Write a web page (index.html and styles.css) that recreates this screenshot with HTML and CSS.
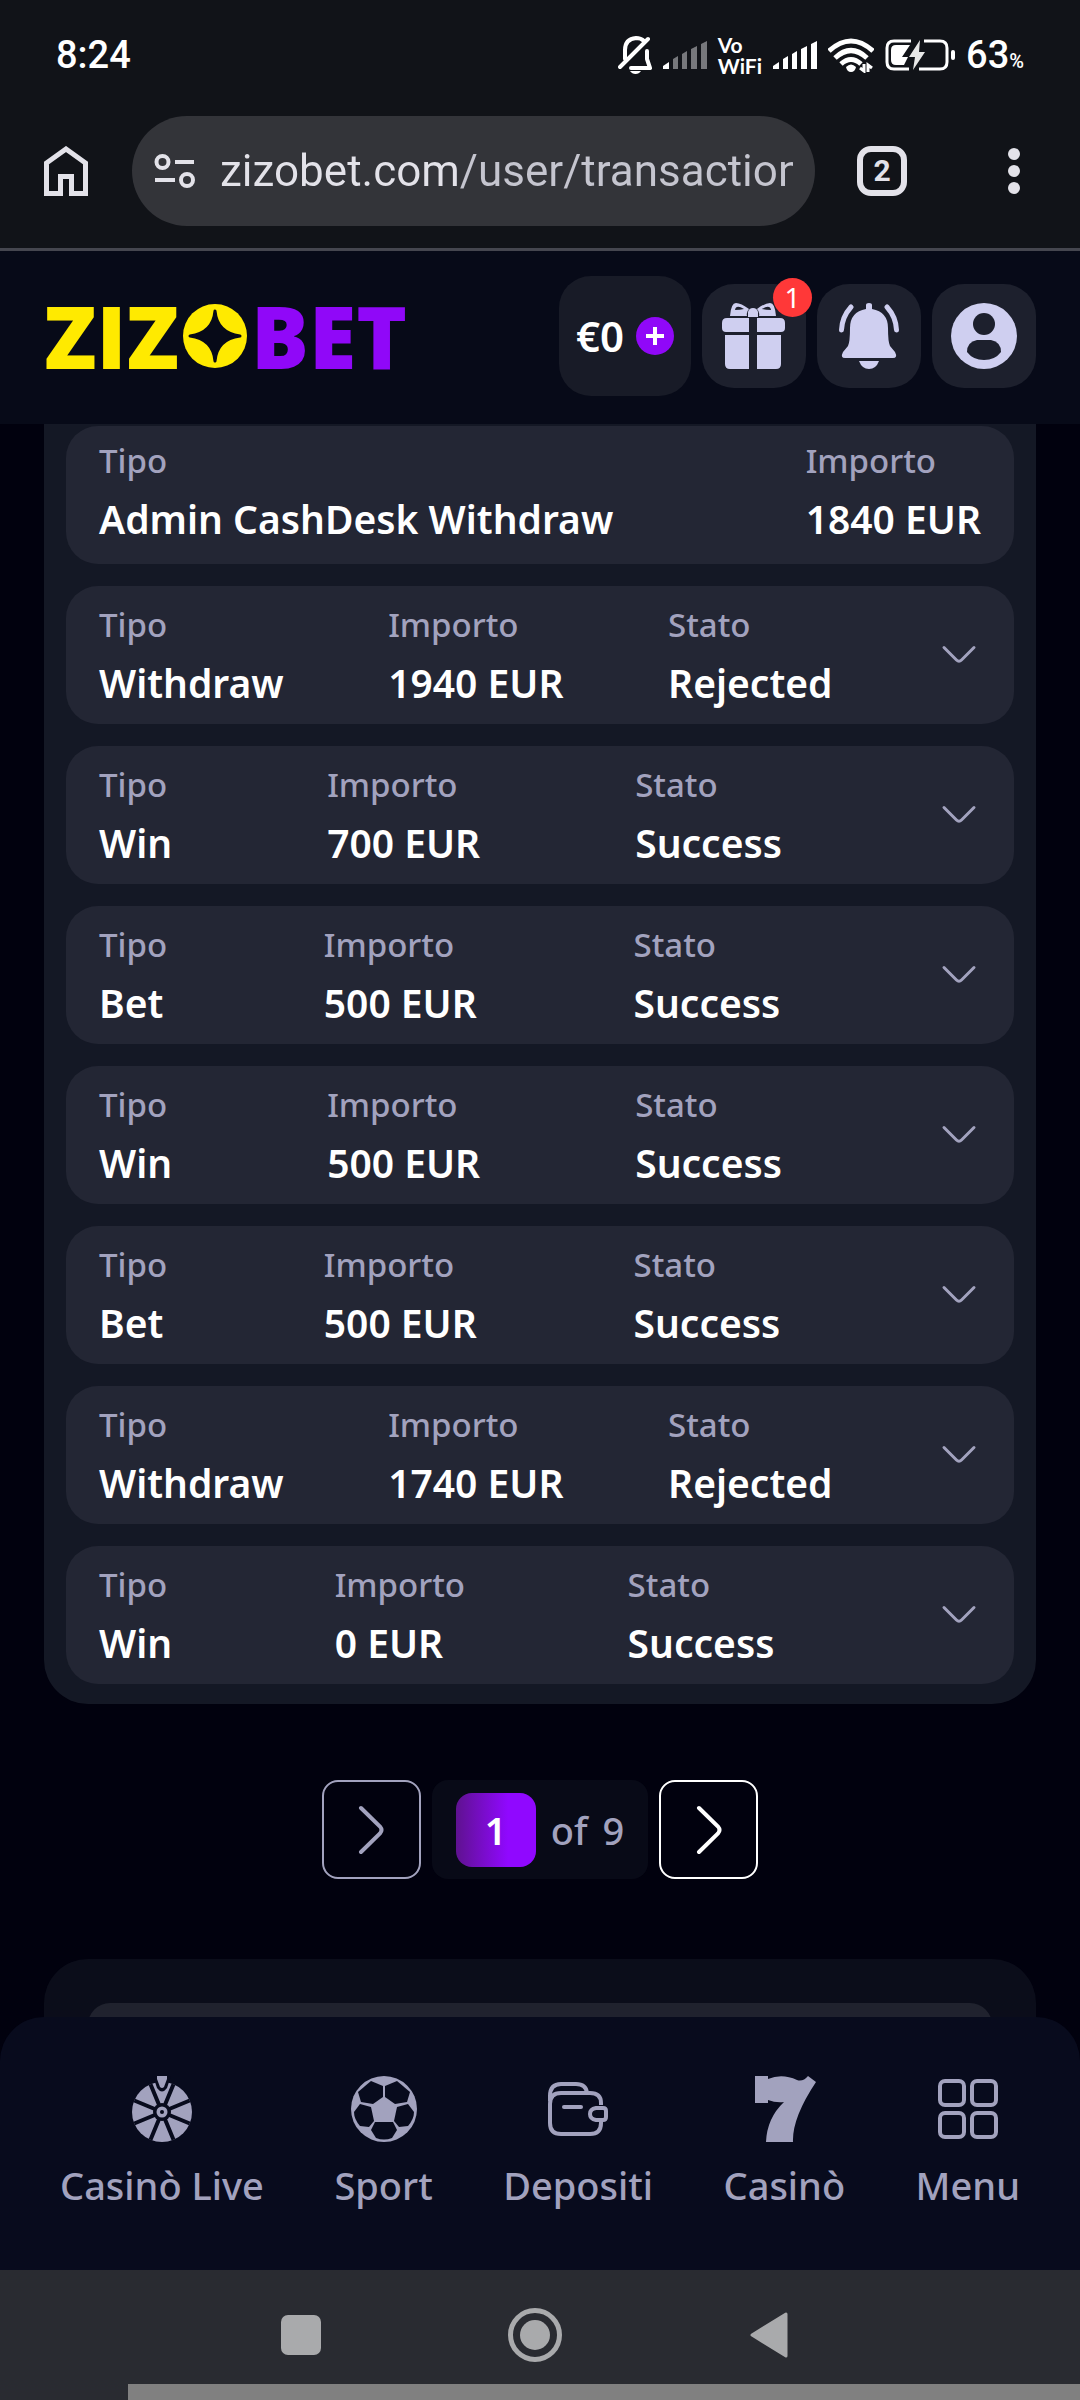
FILE: index.html
```html
<!DOCTYPE html>
<html lang="it">
<head>
    <meta charset="UTF-8">
    <meta name="viewport" content="width=device-width, initial-scale=1.0">
    <title>Zizobet - Transazioni</title>
    <link rel="stylesheet" href="styles.css">
</head>
<body>
    <!-- shared icons -->
    <svg class="sprite" aria-hidden="true">
        <symbol id="icon-down" viewBox="0 0 44 44">
            <path d="M7 15.500L19.500 28Q22 30.500 24.500 28L37 15.500" fill="none" stroke="currentColor" stroke-width="3" stroke-linecap="round"/>
        </symbol>
        <symbol id="icon-next" viewBox="0 0 28 52">
            <path d="M4 4L23 22.500Q26 26 23 29.500L4 48" fill="none" stroke="currentColor" stroke-width="4" stroke-linecap="round"/>
        </symbol>
    </svg>

    <div class="phone">
        <div class="status-bar">
            <span class="clock">8:24</span>
            <div class="status-icons">
                <svg width="34" height="38" viewBox="0 0 34 38" fill="none" stroke="#fff" stroke-width="4" stroke-linecap="round" stroke-linejoin="round">
                    <path d="M7 23V14Q7 3 18 2Q23 2 26 5M29 15V23L32 32H13M2 31L30 3"/>
                    <path d="M12 35H23Q21 38 17.500 38T12 35Z" fill="#fff" stroke="none"/>
                </svg>
                <svg class="signal" width="44" height="28" viewBox="0 0 44 28">
                    <path d="M0 28V25L6 21V28Z" fill="#fff"/>
                    <path d="M10 28V18L15 15V28ZM19 28V13L24 10V28ZM28 28V8L34 5V28ZM38 28V3L44 0V28Z" fill="#77787c"/>
                </svg>
                <span class="vowifi">Vo<br>WiFi</span>
                <svg class="signal" width="44" height="28" viewBox="0 0 44 28">
                    <path d="M0 28V25L6 21V28ZM10 28V18L15 15V28ZM19 28V13L24 10V28ZM28 28V8L34 5V28ZM38 28V3L44 0V28Z" fill="#fff"/>
                </svg>
                <svg class="wifi" width="46" height="35" viewBox="0 0 46 35" fill="none" stroke="#fff" stroke-width="5">
                    <path d="M1 13Q23 -7 45 13M7 20Q23 5 39 20M13 26Q23 17 33 26"/>
                    <path d="M18 29Q23 24 28 29Q27 34 23 34T18 29Z" fill="#fff" stroke="none"/>
                    <path d="M36 26V33L32 30M40 34V27L44 30" stroke-width="3"/>
                </svg>
                <svg class="battery" width="70" height="32" viewBox="0 0 70 32">
                    <path d="M26 2H9Q2 2 2 9V23Q2 30 9 30H24M39 2H55Q62 2 62 9V23Q62 30 55 30H34" fill="none" stroke="#fff" stroke-width="3"/>
                    <path d="M11 6H25L17 18H23L19 26H11Q6 26 6 21V11Q6 6 11 6Z" fill="#fff"/>
                    <path d="M35 1L24 18H30L28 31L40 13H34Z" fill="#e8e8e8"/>
                    <rect x="66" y="11" width="4" height="10" rx="2" fill="#fff"/>
                </svg>
                <span class="percent">63<small>%</small></span>
            </div>
        </div>

        <div class="browser-bar">
            <button class="plain-btn" aria-label="Home">
                <svg width="44" height="50" viewBox="0 0 44 50" fill="none" stroke="#e3e2e9" stroke-width="5">
                    <path d="M2.500 47.500V17L22 3L41.500 17V47.500H27.500V30.500H16.500V47.500Z"/>
                </svg>
            </button>
            <div class="url-box">
                <svg width="42" height="36" viewBox="0 0 42 36" fill="none" stroke="#e3e2e9" stroke-width="4">
                    <circle cx="8.500" cy="9" r="6"/>
                    <circle cx="33" cy="27" r="6"/>
                    <path d="M21 9H40M1 27H21"/>
                </svg>
                <input class="url" type="text" aria-label="Indirizzo" value="zizobet.com/user/transactions">
            </div>
            <button class="tabs-btn">2</button>
            <button class="plain-btn" aria-label="Altro">
                <svg width="12" height="46" viewBox="0 0 12 46" fill="#e3e2e9">
                    <circle cx="6" cy="6" r="6"/><circle cx="6" cy="23" r="6"/><circle cx="6" cy="40" r="6"/>
                </svg>
            </button>
        </div>

        <div class="site">
            <header class="site-header">
                <a class="logo" href="#" aria-label="Zizobet">
                    <span>ZIZ</span>
                    <svg width="64" height="64" viewBox="0 0 64 64">
                        <circle cx="32" cy="32" r="32" fill="#ffea00"/>
                        <path d="M32 7Q34 29 57 32Q34 35 32 57Q30 35 7 32Q30 29 32 7Z" fill="#070a18" stroke="#070a18" stroke-width="3" stroke-linejoin="round"/>
                        <path d="M32 14Q38 27 50 32Q38 37 32 50Q26 37 14 32Q26 27 32 14Z" fill="#070a18"/>
                    </svg>
                    <span class="logo-bet">BET</span>
                </a>
                <div class="header-actions">
                    <button class="balance">
                        €0
                        <svg width="38" height="38" viewBox="0 0 38 38">
                            <circle cx="19" cy="19" r="19" fill="#9008f8"/>
                            <path d="M19 10V28M10 19H28" stroke="#fff" stroke-width="4"/>
                        </svg>
                    </button>
                    <button class="icon-btn" aria-label="Bonus">
                        <svg width="64" height="66" viewBox="0 0 64 66" fill="#cfcff0">
                            <path d="M27 15H5Q0 15 0 20V25Q0 29 4 29H27ZM35 15H58Q63 15 63 20V25Q63 29 59 29H35Z"/>
                            <path d="M27 32H3V61Q3 66 8 66H27ZM35 32H59V61Q59 66 54 66H35Z"/>
                            <path fill-rule="evenodd" d="M25 13H8Q9 0 14 0Q19 0 27 6Q24 9 25 13ZM13 7Q18 7 22 6Q14 1 13 7ZM37 13H54Q53 0 48 0Q43 0 35 6Q38 9 37 13ZM49 7Q44 7 40 6Q48 1 49 7Z"/>
                            <path d="M26 14V9Q27 5 31 5T36 9V14Z"/>
                        </svg>
                        <span class="badge">1</span>
                    </button>
                    <button class="icon-btn" aria-label="Notifiche">
                        <svg width="60" height="66" viewBox="0 0 60 66" fill="#cfcff0">
                            <path d="M27 6V2Q27 0 30 0T33 2V6Q49 9 49 25Q49 39 51 43L56 49Q59 55 54 55H6Q1 55 4 49L9 43Q11 39 11 25Q11 9 27 6Z"/>
                            <path d="M20 58H40Q37 66 30 66T20 58Z"/>
                            <path d="M12 4Q3 14 2.500 27M48 4Q57 14 57.500 27" fill="none" stroke="#cfcff0" stroke-width="5" stroke-linecap="round"/>
                        </svg>
                    </button>
                    <button class="icon-btn" aria-label="Profilo">
                        <svg width="66" height="66" viewBox="0 0 66 66">
                            <circle cx="33" cy="33" r="33" fill="#cfcff0"/>
                            <circle cx="33" cy="21" r="11" fill="#1d202d"/>
                            <path d="M26 37H40Q50 39 50 49Q44 57 33 57T16 49Q16 39 26 37Z" fill="#1d202d"/>
                        </svg>
                    </button>
                </div>
            </header>

            <main>
                <section class="transactions">
                    <div class="card card-plain">
                        <dl><dt>Tipo</dt><dd>Admin CashDesk Withdraw</dd></dl>
                        <dl><dt>Importo</dt><dd>1840 EUR</dd></dl>
                    </div>
                    <div class="card">
                        <dl><dt>Tipo</dt><dd>Withdraw</dd></dl>
                        <dl><dt>Importo</dt><dd>1940 EUR</dd></dl>
                        <dl><dt>Stato</dt><dd>Rejected</dd></dl>
                        <button class="expand" aria-label="Dettagli"><svg><use href="#icon-down"/></svg></button>
                    </div>
                    <div class="card">
                        <dl><dt>Tipo</dt><dd>Win</dd></dl>
                        <dl><dt>Importo</dt><dd>700 EUR</dd></dl>
                        <dl><dt>Stato</dt><dd>Success</dd></dl>
                        <button class="expand" aria-label="Dettagli"><svg><use href="#icon-down"/></svg></button>
                    </div>
                    <div class="card">
                        <dl><dt>Tipo</dt><dd>Bet</dd></dl>
                        <dl><dt>Importo</dt><dd>500 EUR</dd></dl>
                        <dl><dt>Stato</dt><dd>Success</dd></dl>
                        <button class="expand" aria-label="Dettagli"><svg><use href="#icon-down"/></svg></button>
                    </div>
                    <div class="card">
                        <dl><dt>Tipo</dt><dd>Win</dd></dl>
                        <dl><dt>Importo</dt><dd>500 EUR</dd></dl>
                        <dl><dt>Stato</dt><dd>Success</dd></dl>
                        <button class="expand" aria-label="Dettagli"><svg><use href="#icon-down"/></svg></button>
                    </div>
                    <div class="card">
                        <dl><dt>Tipo</dt><dd>Bet</dd></dl>
                        <dl><dt>Importo</dt><dd>500 EUR</dd></dl>
                        <dl><dt>Stato</dt><dd>Success</dd></dl>
                        <button class="expand" aria-label="Dettagli"><svg><use href="#icon-down"/></svg></button>
                    </div>
                    <div class="card">
                        <dl><dt>Tipo</dt><dd>Withdraw</dd></dl>
                        <dl><dt>Importo</dt><dd>1740 EUR</dd></dl>
                        <dl><dt>Stato</dt><dd>Rejected</dd></dl>
                        <button class="expand" aria-label="Dettagli"><svg><use href="#icon-down"/></svg></button>
                    </div>
                    <div class="card">
                        <dl><dt>Tipo</dt><dd>Win</dd></dl>
                        <dl><dt>Importo</dt><dd>0 EUR</dd></dl>
                        <dl><dt>Stato</dt><dd>Success</dd></dl>
                        <button class="expand" aria-label="Dettagli"><svg><use href="#icon-down"/></svg></button>
                    </div>
                </section>

                <div class="pagination">
                    <button class="page-btn page-prev" aria-label="Pagina precedente"><svg><use href="#icon-next"/></svg></button>
                    <div class="page-info">
                        <span class="page-current">1</span>
                        <span>of</span>
                        <span>9</span>
                    </div>
                    <button class="page-btn" aria-label="Pagina successiva"><svg><use href="#icon-next"/></svg></button>
                </div>

                <footer class="site-footer">
                    <div class="footer-box"></div>
                </footer>
            </main>

            <nav class="tab-bar">
                <a href="#">
                    <svg width="60" height="66" viewBox="0 0 60 66">
                        <circle cx="30" cy="36" r="30" fill="#a2a2be"/>
                        <path d="M18.500 8.300L41.500 63.700M41.500 8.300L18.500 63.700M2.300 24.500L57.700 47.500M2.300 47.500L57.700 24.500" stroke="#080b1d" stroke-width="4"/>
                        <circle cx="30" cy="36" r="9" fill="#080b1d"/>
                        <circle cx="30" cy="36" r="5.500" fill="#a2a2be"/>
                        <circle cx="30" cy="36" r="2" fill="#080b1d"/>
                        <path d="M21 0H39L35 12Q30 19 25 12Z" fill="#080b1d"/>
                        <path d="M25 0H35V3L32 11Q30 13 28 11L25 3Z" fill="#a2a2be"/>
                    </svg>
                    Casinò Live
                </a>
                <a href="#">
                    <svg width="66" height="66" viewBox="0 0 66 66">
                        <circle cx="33" cy="33" r="33" fill="#a2a2be"/>
                        <g fill="#080b1d">
                            <path d="M20 5L32 10V21L22 28L10 26L7 16Z"/>
                            <path d="M46 5L34 10V21L44 28L56 26L59 16Z"/>
                            <path d="M9 28L20 31L23 45L18 51L9 50Q3 43 3 36Z"/>
                            <path d="M57 28L46 31L43 45L48 51L57 50Q63 43 63 36Z"/>
                            <path d="M24 46H42L46 54L41 62Q33 65 25 62L20 54Z"/>
                        </g>
                    </svg>
                    Sport
                </a>
                <a href="#">
                    <svg width="60" height="66" viewBox="0 0 60 66" fill="none" stroke="#a2a2be" stroke-width="4">
                        <path d="M53 29V27Q53 17 42 17H13Q2 17 2 28V47Q2 58 13 58H42Q53 58 53 47V44"/>
                        <path d="M2 25V20Q2 8 13 8H28Q38 8 39 17"/>
                        <path d="M48 32H55Q58 32 58 35V41Q58 44 55 44H48Q42 43 42 38T48 32Z"/>
                        <path d="M16 31H33" stroke-linecap="round"/>
                    </svg>
                    Depositi
                </a>
                <a href="#">
                    <svg width="66" height="66" viewBox="-4 0 66 66">
                        <path d="M0 0H13V3Q27 -3 42 4Q48 6 53 0L61 6Q37 42 38 66H11Q12 42 29 26Q21 27 13 24V27H0Z" fill="#a2a2be"/>
                    </svg>
                    Casinò
                </a>
                <a href="#">
                    <svg width="60" height="66" viewBox="0 0 60 66" fill="none" stroke="#a2a2be" stroke-width="4">
                        <rect x="2" y="5" width="24" height="24" rx="5"/><rect x="34" y="5" width="24" height="24" rx="5"/>
                        <rect x="2" y="37" width="24" height="24" rx="5"/><rect x="34" y="37" width="24" height="24" rx="5"/>
                    </svg>
                    Menu
                </a>
            </nav>
        </div>

        <div class="system-bar">
            <button class="plain-btn" aria-label="Recenti">
                <svg width="54" height="54" viewBox="0 0 54 54"><rect x="7" y="7" width="40" height="40" rx="7" fill="#a9aaac"/></svg>
            </button>
            <button class="plain-btn" aria-label="Home di sistema">
                <svg width="54" height="54" viewBox="0 0 54 54"><circle cx="27" cy="27" r="24.500" fill="none" stroke="#a9aaac" stroke-width="5"/><circle cx="27" cy="27" r="15" fill="#a9aaac"/></svg>
            </button>
            <button class="plain-btn" aria-label="Indietro">
                <svg width="54" height="54" viewBox="0 0 54 54"><path d="M44 6V48L10 27Z" fill="#a9aaac" stroke="#a9aaac" stroke-width="3" stroke-linejoin="round"/></svg>
            </button>
        </div>
        <div class="handle"></div>
    </div>
</body>
</html>
```
FILE: styles.css
```css
* {
    box-sizing: border-box;
}
body {
    margin: 0;
    background-color: #111318;
    color: white;
    font-family: "Noto Sans", sans-serif;
}
button {
    border: none;
    padding: 0;
    background: none;
    color: inherit;
    font-family: inherit;
    cursor: pointer;
}
a {
    color: inherit;
    text-decoration: none;
}
svg {
    display: block;
    flex-shrink: 0;
}
.sprite {
    position: absolute;
    width: 0;
    height: 0;
}
.phone {
    display: flex;
    flex-direction: column;
    height: 100vh;
}

/* Android status bar */
.status-bar {
    display: flex;
    align-items: center;
    justify-content: space-between;
    height: 110px;
    padding: 0 56px;
    font-family: Roboto, sans-serif;
    font-size: 38px;
    font-weight: 500;
}
.status-icons {
    display: flex;
    align-items: center;
    gap: 11px;
}
.vowifi {
    font-family: Lato, sans-serif;
    font-size: 21px;
    line-height: 21px;
    font-weight: 700;
}
.percent small {
    font-size: 20px;
}

/* Browser toolbar */
.browser-bar {
    display: flex;
    align-items: center;
    height: 141px;
    padding: 6px 60px 22px 44px;
    border-bottom: 3px solid #45464f;
}
.url-box {
    display: flex;
    align-items: center;
    flex: 1;
    gap: 24px;
    height: 110px;
    margin: 0 42px 0 44px;
    padding: 0 22px;
    border-radius: 55px;
    background-color: #333439;
}
.url {
    flex: 1;
    min-width: 0;
    height: 60px;
    padding: 0;
    border: none;
    background: linear-gradient(to right, #e3e2e9 240px, #c5c5cf 240px);
    -webkit-background-clip: text;
    background-clip: text;
    color: transparent;
    font-family: Roboto, sans-serif;
    font-size: 44px;
}
.tabs-btn {
    width: 50px;
    height: 50px;
    margin-right: 101px;
    border: 6px solid #e3e2e9;
    border-radius: 14px;
    color: #e3e2e9;
    font-family: Roboto, sans-serif;
    font-size: 30px;
    font-weight: 700;
    line-height: 38px;
}

/* Site */
.site {
    position: relative;
    flex: 1;
    min-height: 0;
    overflow: hidden;
    background-color: #01010e;
}
.site-header {
    display: flex;
    align-items: center;
    justify-content: space-between;
    height: 173px;
    padding: 0 44px 4px;
    background-color: #070a18;
}
.logo {
    display: flex;
    align-items: center;
    gap: 4px;
    color: #ffea00;
    font-family: "Open Sans", sans-serif;
    font-size: 86px;
    font-weight: 800;
    line-height: 80px;
}
.logo-bet {
    color: #9008f8;
}
.header-actions {
    display: flex;
    align-items: center;
    gap: 11px;
}
.balance {
    display: flex;
    align-items: center;
    gap: 12px;
    height: 120px;
    padding: 0 17px;
    border-radius: 32px;
    background-color: #181b27;
    font-size: 42px;
    font-weight: 600;
}
.icon-btn {
    position: relative;
    display: flex;
    align-items: center;
    justify-content: center;
    width: 104px;
    height: 104px;
    border-radius: 32px;
    background-color: #1d202d;
}
.badge {
    position: absolute;
    top: -6px;
    right: -6px;
    width: 39px;
    height: 39px;
    border-radius: 50%;
    background-color: #ff3838;
    font-size: 28px;
    line-height: 39px;
}

/* Transactions */
.transactions {
    display: flex;
    flex-direction: column;
    gap: 22px;
    margin: 0 44px;
    padding: 2px 22px 20px;
    border-radius: 0 0 44px 44px;
    background-color: #141825;
}
.card {
    display: flex;
    align-items: center;
    justify-content: space-between;
    height: 138px;
    padding: 0 33px 2px;
    border-radius: 32px;
    background-color: #232634;
}
.card-plain {
    align-items: flex-start;
    padding-top: 6px;
}
dl {
    margin: 0;
}
dt {
    color: #a2a2be;
    font-size: 33px;
    font-weight: 500;
    line-height: 58px;
}
dd {
    margin: 0;
    font-size: 39px;
    font-weight: 600;
    line-height: 58px;
}
.expand svg {
    width: 44px;
    height: 44px;
    color: #a2a2be;
}

/* Pagination */
.pagination {
    display: flex;
    justify-content: center;
    gap: 11px;
    margin: 76px 0 80px;
}
.page-btn {
    display: flex;
    align-items: center;
    justify-content: center;
    width: 99px;
    height: 99px;
    border: 2px solid white;
    border-radius: 16px;
}
.page-btn svg {
    width: 28px;
    height: 52px;
}
.page-prev {
    border-color: #a2a2be;
    color: #a2a2be;
}
.page-info {
    display: flex;
    align-items: center;
    gap: 15px;
    padding: 0 24px;
    border-radius: 16px;
    background-color: #080a17;
    color: #a2a2be;
    font-size: 38px;
    font-weight: 500;
}
.page-current {
    width: 80px;
    border-radius: 16px;
    background: linear-gradient(to right, #5f1290, #9008ff 65%);
    color: white;
    font-weight: 600;
    line-height: 74px;
    text-align: center;
}

/* Footer */
.site-footer {
    margin: 0 44px;
    padding: 44px;
    border-radius: 44px;
    background-color: #0b0d1a;
}
.footer-box {
    height: 240px;
    border-radius: 22px;
    background-color: #20222e;
}

/* Bottom navigation, stays over the page */
.tab-bar {
    position: absolute;
    right: 0;
    bottom: 0;
    left: 0;
    display: flex;
    justify-content: space-between;
    height: 253px;
    padding: 59px 60px 0;
    border-radius: 44px 44px 0 0;
    background-color: #080b1d;
}
.tab-bar a {
    display: flex;
    flex-direction: column;
    align-items: center;
    gap: 15px;
    color: #a2a2be;
    font-size: 38px;
    font-weight: 500;
    line-height: 56px;
}

/* Android navigation */
.system-bar {
    display: flex;
    align-items: center;
    justify-content: center;
    gap: 180px;
    height: 114px;
    padding: 16px 10px 0 0;
    background-color: #292b31;
}
.handle {
    height: 16px;
    border-left: 128px solid #292b31;
    background-color: #808080;
}
```
